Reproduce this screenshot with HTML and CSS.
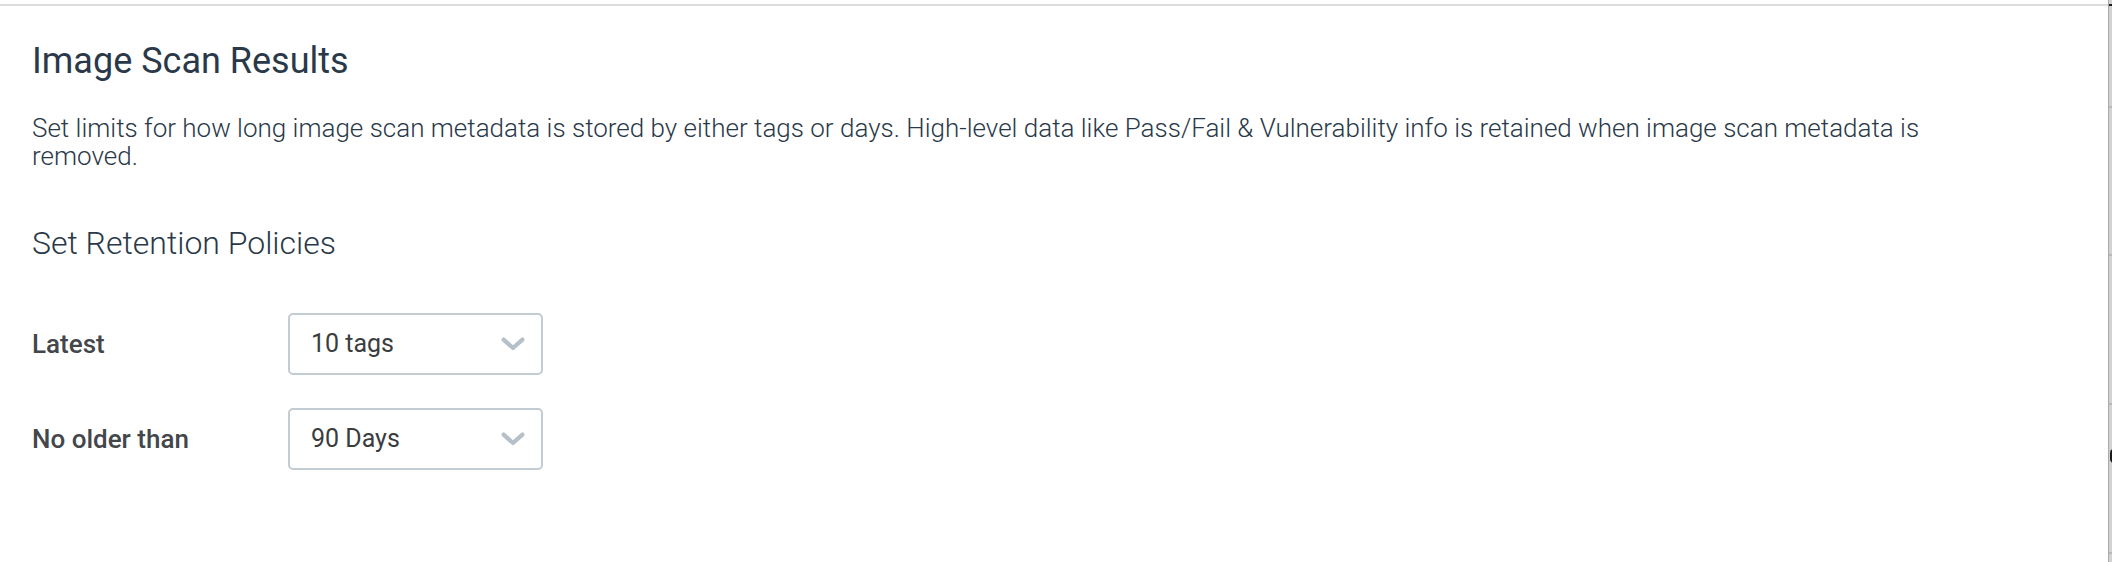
FILE: index.html
```html
<!DOCTYPE html>
<html lang="en">
<head>
<meta charset="utf-8">
<title>Image Scan Results</title>
<link rel="stylesheet" href="styles.css">
</head>
<body>
<div class="window">
  <main class="panel">
    <h1 class="title">Image Scan Results</h1>
    <p class="desc">Set limits for how long image scan metadata is stored by either tags or days. High-level data like Pass/Fail &amp; Vulnerability info is retained when image scan metadata is removed.</p>
    <h2 class="subtitle">Set Retention Policies</h2>
    <div class="rows">
      <div class="row">
        <span class="label">Latest</span>
        <div class="select">
          <span class="value">10 tags</span>
          <svg class="chev" viewBox="0 0 24 14" width="24" height="14" aria-hidden="true"><path d="M2.6 2.6 L12 11 L21.4 2.6" fill="none" stroke="#b6c0c8" stroke-width="4.2" stroke-linecap="round" stroke-linejoin="round"/></svg>
        </div>
      </div>
      <div class="row">
        <span class="label">No older than</span>
        <div class="select">
          <span class="value">90 Days</span>
          <svg class="chev" viewBox="0 0 24 14" width="24" height="14" aria-hidden="true"><path d="M2.6 2.6 L12 11 L21.4 2.6" fill="none" stroke="#b6c0c8" stroke-width="4.2" stroke-linecap="round" stroke-linejoin="round"/></svg>
        </div>
      </div>
    </div>
  </main>
  <div class="edge">
    <span class="edge-cap"></span>
    <span class="notch n1"></span>
    <span class="notch n2"></span>
    <span class="notch n3"></span>
    <span class="notch n4"></span>
    <span class="edge-dot"></span>
  </div>
</div>
</body>
</html>
```

FILE: styles.css
```css
* { box-sizing: border-box; }
html, body { margin: 0; padding: 0; background: #ffffff; }
body {
  font-family: Roboto, "Liberation Sans", Arial, sans-serif;
  width: 2112px;
  height: 562px;
  overflow: hidden;
}
.window {
  display: flex;
  height: 562px;
  padding-top: 4px;
}
.panel {
  flex: 1;
  border-top: 2px solid #dcdcdc;
  padding: 33px 32px 0 32px;
}
.title {
  margin: 0;
  font-size: 36px;
  line-height: 44px;
  font-weight: 400;
  color: #2a3949;
}
.desc {
  margin: 31px 0 0 0;
  max-width: 1960px;
  font-size: 26px;
  line-height: 28px;
  font-weight: 300;
  color: #2a3949;
}
.subtitle {
  margin: 54px 0 0 0;
  font-size: 32px;
  line-height: 38px;
  font-weight: 300;
  color: #2a3949;
}
.rows {
  margin-top: 51px;
  display: flex;
  flex-direction: column;
  gap: 33px;
}
.row {
  display: flex;
  align-items: center;
}
.label {
  width: 256px;
  font-size: 26px;
  line-height: 28px;
  font-weight: 500;
  color: #43474b;
}
.select {
  width: 255px;
  height: 62px;
  border: 2px solid #c3ccd3;
  border-radius: 5px;
  display: flex;
  align-items: center;
  justify-content: space-between;
  padding: 0 16px 0 21px;
}
.value {
  font-size: 25px;
  line-height: 28px;
  color: #3a3d40;
}
.chev { display: block; }
.edge {
  position: relative;
  width: 4px;
  margin-top: -4px;
  border-left: 1px solid #a9a9a9;
  background: #d2d2d2;
}
.edge-cap {
  position: absolute;
  left: 0; top: 4px;
  width: 3px; height: 2px;
  background: #1d1d1d;
}
.notch {
  position: absolute;
  left: 0;
  width: 3px; height: 2px;
  background: #b8b8b8;
}
.n1 { top: 106px; }
.n2 { top: 254px; }
.n3 { top: 403px; }
.n4 { top: 552px; }
.edge-dot {
  position: absolute;
  left: 1px; top: 449px;
  width: 8px; height: 14px;
  border-radius: 7px;
  background: #1a1a1a;
}
```
